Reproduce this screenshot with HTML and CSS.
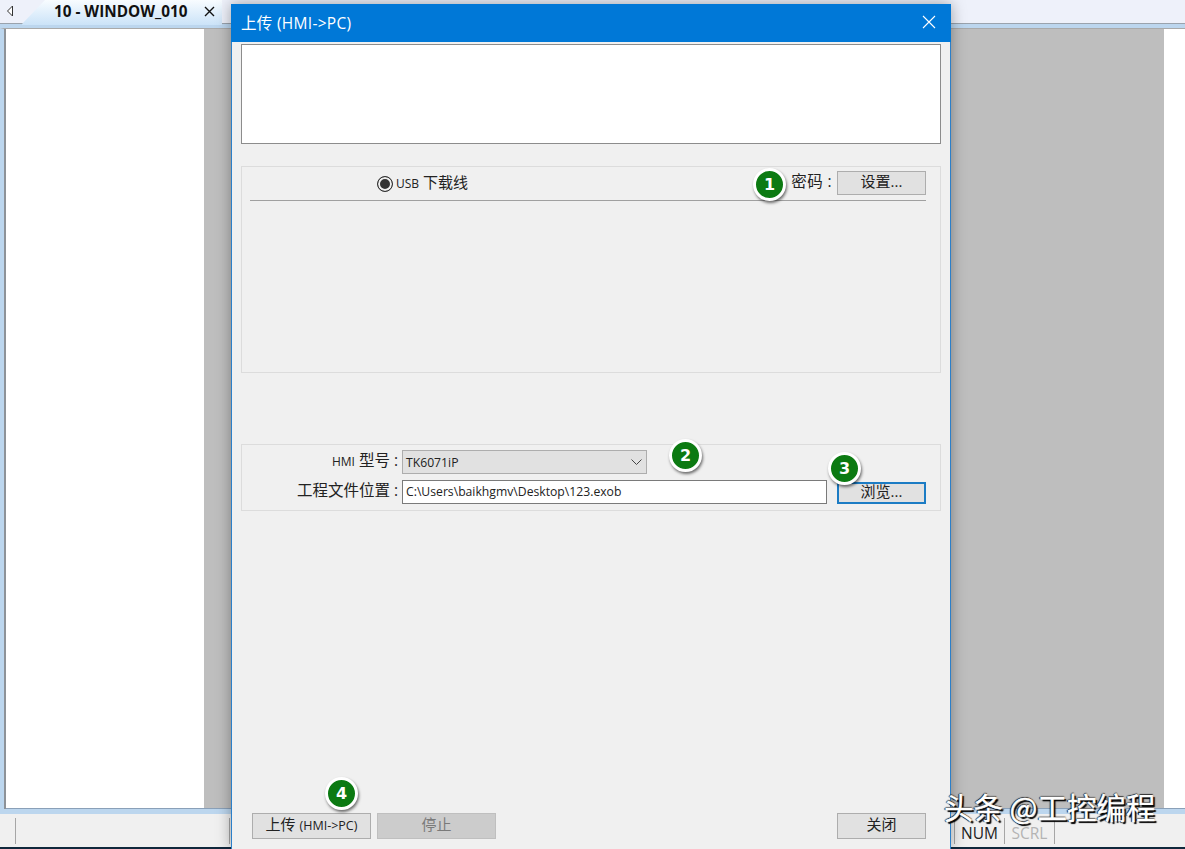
FILE: index.html
```html
<!DOCTYPE html>
<html lang="en">
<head>
  <meta charset="UTF-8">
  <title>上传 (HMI->PC)</title>
  <link rel="stylesheet" href="styles.css">
</head>
<body>
  <div class="app">
    <div class="tabbar">
      <svg class="tab-arrow" width="8" height="12" viewBox="0 0 8 12"><path d="M6.5 1 L1.5 6 L6.5 11 Z" fill="#fff" stroke="#333"/></svg>
      <div class="tab">
        <span class="tab-name">10 - WINDOW_010</span>
        <svg class="tab-close" width="11" height="11" viewBox="0 0 11 11"><path d="M1 1 L10 10 M10 1 L1 10" stroke="#111" stroke-width="1.4"/></svg>
      </div>
    </div>
    <div class="workspace">
      <div class="canvas-left"></div>
      <div class="canvas-gray"></div>
      <div class="canvas-right"></div>
    </div>
    <div class="statusbar">
      <span class="cell cell-first"></span>
      <span class="cell cell-second"></span>
      <span class="cell cell-wide"></span>
      <span class="cell cell-num">NUM</span>
      <span class="cell cell-scrl">SCRL</span>
    </div>
    <div class="taskbar"></div>
  </div>

  <div class="dialog">
    <div class="titlebar">
      <span>上传 (HMI-&gt;PC)</span>
      <svg width="14" height="14" viewBox="0 0 14 14"><path d="M1 1 L13 13 M13 1 L1 13" stroke="#fff" stroke-width="1.1"/></svg>
    </div>
    <div class="dialog-body">
      <div class="log"></div>

      <div class="group group-conn">
        <div class="conn-row">
          <span class="radio-wrap">
            <span class="radio"></span>
            <span class="radio-label"><small>USB</small> 下载线</span>
          </span>
          <span class="pw-wrap">
            <span class="pw-label">密码 :</span>
            <button class="btn btn-set">设置...</button>
          </span>
        </div>
      </div>

      <div class="group group-hmi">
        <div class="form-row">
          <label class="form-label"><small>HMI</small> 型号 :</label>
          <div class="select">
            <span>TK6071iP</span>
            <svg width="11" height="6" viewBox="0 0 11 6"><path d="M0.5 0.5 L5.5 5.5 L10.5 0.5" fill="none" stroke="#444"/></svg>
          </div>
        </div>
        <div class="form-row">
          <label class="form-label">工程文件位置 :</label>
          <div class="input">C:\Users\baikhgmv\Desktop\123.exob</div>
          <button class="btn btn-browse">浏览...</button>
        </div>
      </div>

      <div class="footer">
        <button class="btn btn-upload">上传 <small>(HMI-&gt;PC)</small></button>
        <button class="btn btn-stop" disabled>停止</button>
        <button class="btn btn-close">关闭</button>
      </div>
    </div>
  </div>

  <span class="badge badge-1">1</span>
  <span class="badge badge-2">2</span>
  <span class="badge badge-3">3</span>
  <span class="badge badge-4">4</span>

  <div class="watermark">头条 @工控编程</div>
</body>
</html>
```

FILE: styles.css
```css
* {
  box-sizing: border-box;
}
body {
  margin: 0;
  width: 1185px;
  height: 849px;
  overflow: hidden;
  position: relative;
  background: #f0f0f0;
  font-family: "Open Sans", "Noto Sans CJK SC", sans-serif;
  font-size: 15px;
  color: #222;
}
.app {
  display: flex;
  flex-direction: column;
  height: 849px;
}

/* tab strip */
.tabbar {
  height: 28px;
  flex: none;
  display: flex;
  align-items: flex-start;
  background: #eef1fa;
  border-bottom: 4px solid #bcd6ee;
  box-shadow: inset 0 -1px 0 #9aa3ad;
}
.tab-arrow {
  margin: 5px 0 0 6px;
}
.tab {
  display: flex;
  align-items: center;
  width: 200px;
  height: 25px;
  margin-left: 8px;
  padding: 0 0 3px 32px;
  background: linear-gradient(to bottom, #f8fcff, #cbe3f8);
  clip-path: polygon(0 24px, 23px 0, 100% 0, 100% 100%, 0 100%);
}
.tab-name {
  font-weight: bold;
  font-size: 15.3px;
  color: #111;
  white-space: nowrap;
}
.tab-close {
  margin-left: auto;
  margin-right: 7px;
}

/* document area */
.workspace {
  flex: 1;
  display: flex;
  background: #fff;
  border-top: 1px solid #a9a9a9;
  border-left: 4px solid #bcd6ee;
  border-bottom: 5px solid #bcd6ee;
  box-shadow: inset 2px 0 0 #8d9298, inset 0 -1px 0 #8aa0b8;
}
.canvas-left {
  width: 200px;
}
.canvas-gray {
  width: 960px;
  background: #bebebe;
  margin-bottom: 1px;
}
.canvas-right {
  flex: 1;
}

.statusbar {
  height: 33px;
  flex: none;
  display: flex;
  align-items: center;
  background: #f0f0f0;
}
.cell {
  height: 26px;
  padding-top: 5px;
  line-height: 20px;
  border-right: 1px solid #a6a6a6;
  font-size: 15.5px;
  text-align: center;
}
.cell-first {
  width: 16px;
}
.cell-second {
  width: 214px;
}
.cell-wide {
  width: 725px;
}
.cell-num {
  width: 50px;
}
.cell-scrl {
  width: 50px;
  color: #b4b4b4;
}
.taskbar {
  height: 2px;
  flex: none;
  background: #10283c;
}

/* dialog window */
.dialog {
  position: absolute;
  left: 231px;
  top: 4px;
  width: 720px;
  height: 845px;
  display: flex;
  flex-direction: column;
  background: #f0f0f0;
  border: 1px solid #2b7fc9;
  border-top: none;
  border-bottom: none;
  box-shadow: 0 0 14px rgba(0, 0, 0, 0.35);
}
.titlebar {
  height: 38px;
  flex: none;
  display: flex;
  align-items: center;
  justify-content: space-between;
  margin: 0 -1px;
  padding: 0 15px 2px 10px;
  background: #0078d7;
  color: #fff;
  font-size: 15.5px;
  letter-spacing: 0.3px;
}
.dialog-body {
  flex: 1;
  display: flex;
  flex-direction: column;
  padding: 2px 9px 10px;
}
.log {
  height: 100px;
  background: #fff;
  border: 1px solid #8c8c8c;
  margin-bottom: 22px;
}
.group {
  border: 1px solid #dcdcdc;
}
.group-conn {
  height: 207px;
  padding: 0 14px 0 8px;
  margin-bottom: 71px;
}
.conn-row {
  height: 34px;
  display: flex;
  align-items: center;
  justify-content: space-between;
  border-bottom: 1px solid #a0a0a0;
}
.radio-wrap {
  display: flex;
  align-items: center;
  margin-left: 127px;
  gap: 3px;
}
.radio {
  width: 16px;
  height: 16px;
  border-radius: 50%;
  background: #333;
  border: 1px solid #333;
  box-shadow: inset 0 0 0 2px #f0f0f0;
}
.radio-label {
  padding-bottom: 4px;
}
small {
  font-size: 12px;
}
.pw-wrap {
  display: flex;
  align-items: center;
  gap: 5px;
  margin-top: -1px;
}
.pw-label {
  font-size: 15.5px;
  padding-bottom: 5px;
  letter-spacing: 0.4px;
}
.btn {
  height: 24px;
  padding: 0 0 3px;
  background: #e1e1e1;
  border: 1px solid #adadad;
  font-family: inherit;
  font-size: 15px;
  line-height: 15px;
  color: #222;
}
.btn-set {
  width: 89px;
}
.group-hmi {
  height: 67px;
  padding: 5px 14px 0 0;
  display: flex;
  flex-direction: column;
  gap: 6px;
}
.form-row {
  display: flex;
  align-items: center;
  height: 24px;
}
.form-label {
  width: 156px;
  margin-right: 4px;
  padding-bottom: 5px;
  font-size: 15.5px;
  text-align: right;
  white-space: nowrap;
}
.select {
  width: 245px;
  height: 24px;
  display: flex;
  align-items: center;
  justify-content: space-between;
  padding: 0 4px 0 3px;
  background: #e1e1e1;
  border: 1px solid #adadad;
  font-size: 12.2px;
}
.input {
  width: 425px;
  height: 24px;
  line-height: 22px;
  padding-left: 3px;
  background: #fff;
  border: 1px solid #7a7a7a;
  font-size: 12.2px;
}
.btn-browse {
  width: 89px;
  height: 22px;
  margin: 1px 0 0 10px;
  padding: 0 0 3px;
  border: 2px solid #1c7cc4;
}
.footer {
  margin-top: auto;
  display: flex;
  gap: 6px;
  padding-left: 11px;
  padding-right: 15px;
}
.btn-upload {
  width: 119px;
  height: 26px;
}
.btn-upload small {
  font-size: 12.5px;
}
.btn-stop {
  width: 119px;
  height: 26px;
  background: #cccccc;
  border-color: #bfbfbf;
  color: #7a7a7a;
}
.btn-close {
  width: 89px;
  height: 26px;
  margin-left: auto;
}

/* numbered callouts */
.badge {
  position: absolute;
  width: 33px;
  height: 33px;
  display: flex;
  align-items: center;
  justify-content: center;
  border-radius: 50%;
  background: #0c7a12;
  border: 3px solid #fff;
  box-shadow: 1px 2px 3px rgba(0, 0, 0, 0.55);
  color: #fff;
  font-family: "DejaVu Sans", sans-serif;
  font-weight: bold;
  font-size: 16px;
}
.badge-1 { left: 753px; top: 168px; }
.badge-2 { left: 669px; top: 439px; }
.badge-3 { left: 828px; top: 452px; }
.badge-4 { left: 325px; top: 777px; }

.watermark {
  position: absolute;
  left: 944px;
  top: 791px;
  font-family: "Noto Sans CJK SC", sans-serif;
  font-size: 29.5px;
  line-height: 31px;
  color: #fff;
  white-space: nowrap;
  -webkit-text-stroke: 0.4px #fff;
  text-shadow: 2px 2px 1px #000, -1px 0 1px #000, 0 -1px 1px #333;
}
```
